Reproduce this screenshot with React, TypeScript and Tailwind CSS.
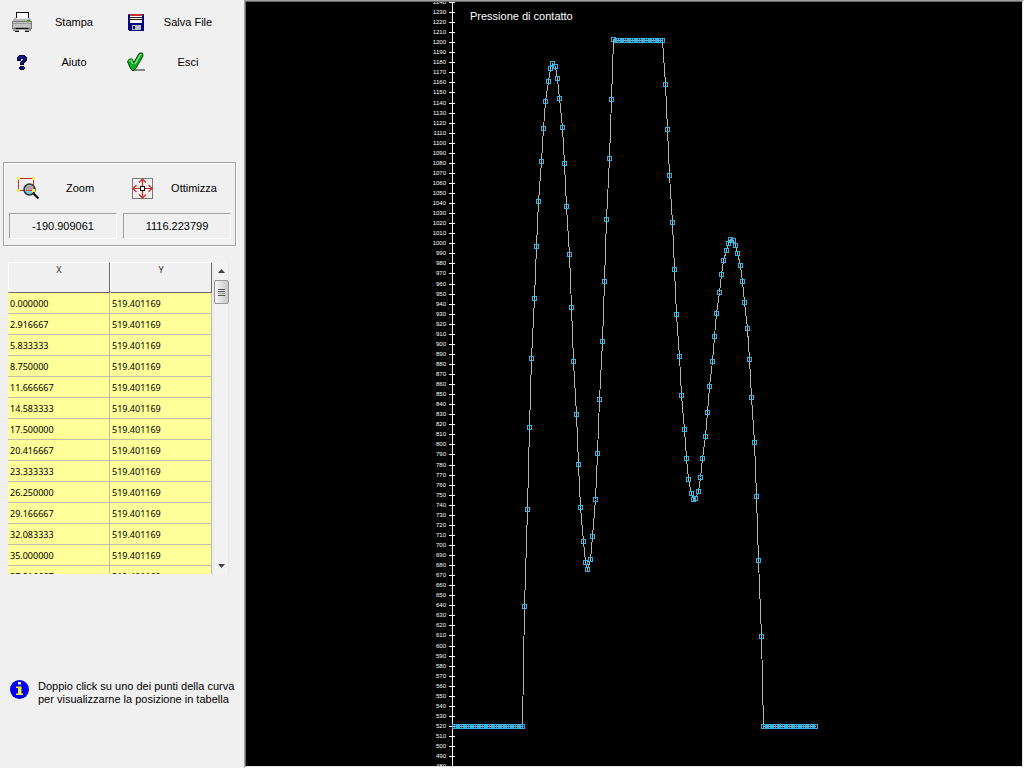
import { useState } from "react"
import type { ReactNode } from "react"

const STEP_X = 35 / 12
const BASE_PRESSURE = 519.401169
const VISIBLE_ROWS = 14

// Screen heights of the samples between the flat stretches
const RISE = [
  606, 509, 427, 358, 298, 246, 201, 161, 128, 101, 81, 68, 63, 66, 78, 98, 127, 163, 206, 254,
  307, 361, 414, 464, 507, 541, 562, 569, 559, 536, 499, 453, 399, 341, 281, 219, 158, 99, 39,
]
const FALL = [
  84, 129, 175, 222, 269, 314, 356, 395, 429, 458, 479, 493, 499, 498, 491, 477, 458, 436, 412,
  386, 361, 336, 313, 292, 274, 260, 250, 243, 239, 240, 245, 253, 265, 281, 302, 328, 359, 397,
  442, 496, 560, 636,
]
const CURVE = [
  ...Array<number>(30).fill(726),
  ...RISE,
  ...Array<number>(21).fill(40),
  ...FALL,
  ...Array<number>(23).fill(726),
].map((y, i) => ({ x: Math.round(454 + i * 2.342), y }))

const ROWS = CURVE.map((p, i) => ({
  x: (i * STEP_X).toFixed(6),
  y: (BASE_PRESSURE + (726 - p.y) / 1.0056).toFixed(6),
}))

const TICKS = Array.from({ length: 77 }, (_, i) => 1240 - i * 10)

const tickY = (value: number) => Math.round(726 - (value - 520) * 1.0056)

function PrinterIcon() {
  return (
    <svg width="20" height="20" viewBox="0 0 20 20" shapeRendering="crispEdges">
      <path d="M5 0h12v7H4V3z" fill="#fff" />
      <path d="M4 0h13v1H5v5H4zM16 1h1v5h-1z" fill="#111" />
      <path d="M2 6h16v1h1v2H1V7h1z" fill="#b8b8b8" />
      <path d="M4 6h12v1H4z" fill="#eee" />
      <path d="M0 9h20v8H0z" fill="#777" />
      <path d="M1 10h18v6H1z" fill="#c3c3c3" />
      <path d="M1 11h18v1H1zM2 15h16v1H2z" fill="#999" />
      <path d="M15 8h2v2h-2z" fill="#22b422" />
      <path d="M17 8h1v2h-1z" fill="#b06010" />
      <path d="M1 17h18v2H1z" fill="#999" />
      <path d="M4 16h12v1H4zM3 19h4v1H3zM13 19h4v1h-4z" fill="#111" />
      <path d="M7 18h6v1H7z" fill="#fff" />
    </svg>
  )
}

function FloppyIcon() {
  return (
    <svg width="16" height="17" viewBox="0 0 16 17" shapeRendering="crispEdges">
      <path d="M0 0h16v17H1L0 16z" fill="#05057e" />
      <path d="M2 0h12v9H2z" fill="#fff" />
      <path d="M2 0h12v2H2z" fill="#c23030" />
      <path d="M2 3h12v1H2zM2 5h12v1H2z" fill="#222" />
      <path d="M4 11h9v5H4z" fill="#b9bdc6" />
      <path d="M5 12h2v3H5z" fill="#05057e" />
      <path d="M0 0h1v1H0zM14 1h1v1h-1z" fill="#4d4db0" />
    </svg>
  )
}

function HelpIcon() {
  return (
    <svg width="12" height="15" viewBox="0 0 12 15" shapeRendering="crispEdges">
      <path
        d="M3 0h6v1h1v1h1v4h-1v1H9v1H8v2H4V7h1V6h1V5h1V4H5v2H1V2h1V1h1zM4 11h4v1h1v2H8v1H4v-1H3v-2h1z"
        fill="#050535"
      />
      <path d="M3 1h5v1h2v3H9v1H8v1H7v2H5V7h1V6h1V5h1V3H4v2H2V2h1zM5 12h3v2H5z" fill="#1414a0" />
    </svg>
  )
}

function CheckIcon() {
  return (
    <svg width="18" height="20" viewBox="0 0 18 20">
      <path d="M7 17h11v2H7z" fill="#858585" />
      <path
        d="M.5 9.5l2-2.500h2.500l2 3.500 3.500-6.500 2-3h3l.5 3-3.500 6-3.500 6-2 2.500H5l-2-3z"
        fill="#12ac22"
        stroke="#063b0a"
        strokeLinejoin="round"
      />
      <path d="M2 9l2-1 2 4M8 12l4-7 2-3" fill="none" stroke="#7bf07c" strokeWidth="1.3" />
    </svg>
  )
}

function ZoomIcon() {
  return (
    <svg width="22" height="22" viewBox="0 0 22 22">
      <path d="M1.500 1.500h15v12h-15z" fill="none" stroke="#c92b2b" shapeRendering="crispEdges" />
      <circle cx="12.500" cy="12.500" r="5.500" fill="#7fc9cc" stroke="#333" strokeWidth="1.5" />
      <path d="M9 9h6v4H9z" fill="#d98a98" opacity=".7" />
      <path d="M16.500 8v5.500H9" fill="none" stroke="#c92b2b" opacity=".7" />
      <path
        d="M0 0h3v3H0zM15 0h3v3h-3zM0 12h3v3H0zM15 12h3v3h-3z"
        fill="#f5ec55"
        shapeRendering="crispEdges"
      />
      <path d="M16.500 16.500l5 5" stroke="#111" strokeWidth="2.2" />
    </svg>
  )
}

function FitIcon() {
  return (
    <svg width="21" height="21" viewBox="0 0 21 21">
      <path d="M.5.5h20v20H.5z" fill="#f5efef" stroke="#777" shapeRendering="crispEdges" />
      <path
        d="M10.5 1v19M1 10.5h19M7 4.5l3.5-3.5L14 4.5M7 16.5l3.5 3.5 3.5-3.5M4.5 7L1 10.5 4.5 14M16.5 7l3.5 3.5-3.5 3.5"
        fill="none"
        stroke="#c92b2b"
        strokeWidth="1.2"
      />
      <path d="M8.5 8.5h4v4h-4z" fill="#fff" stroke="#111" shapeRendering="crispEdges" />
    </svg>
  )
}

function InfoIcon() {
  return (
    <svg width="19" height="19" viewBox="0 0 19 19" className="shrink-0">
      <circle cx="9.5" cy="9.5" r="9.5" fill="#0202ee" />
      <path d="M8 2h3v2.5H8z" fill="#f4f4c0" />
      <path d="M6 6.5h5.500v7H13V15H6v-1.500h2V8H6z" fill="#f5ee28" />
    </svg>
  )
}

function ToolButton({ icon, label, onClick }: { icon: ReactNode; label: string; onClick?: () => void }) {
  return (
    <button type="button" onClick={onClick} className="flex h-10 w-[107px] items-center">
      <span className="flex w-[38px] justify-center">{icon}</span>
      <span className="w-[66px] text-center">{label}</span>
    </button>
  )
}

function Readout({ label, value }: { label: string; value: string }) {
  return (
    <input
      readOnly
      aria-label={label}
      value={value}
      className="h-[26px] w-[108px] border border-t-[#a0a0a0] border-r-white border-b-white border-l-[#a0a0a0] bg-transparent text-center text-[11px] outline-none"
    />
  )
}

function PointsTable({ first, onScroll }: { first: number; onScroll: (first: number) => void }) {
  return (
    <div className="mt-4 ml-2 flex h-[312px] w-[221px]">
      <div className="w-[204px] overflow-hidden">
        <table className="w-full table-fixed border-separate border-spacing-0 font-['Noto_Sans',sans-serif] text-[9px]">
          <thead>
            <tr className="h-[31px]">
              {["X", "Y"].map((name) => (
                <th
                  key={name}
                  scope="col"
                  className="border border-t-white border-r-[#696969] border-b-[#696969] border-l-white bg-[#f0f0f0] p-0 align-top font-normal text-[#333]"
                >
                  {name}
                </th>
              ))}
            </tr>
          </thead>
          <tbody>
            {ROWS.slice(first, first + VISIBLE_ROWS).map((row) => (
              <tr key={row.x} className="h-[21px] bg-[#ffff99]">
                <td className="border-r border-b border-[#c0c0a8] p-0 pt-px pl-0.5">{row.x}</td>
                <td className="border-r border-b border-[#c0c0a8] p-0 pt-px pl-0.5">{row.y}</td>
              </tr>
            ))}
          </tbody>
        </table>
      </div>

      {/* Scrollbar */}
      <div className="ml-px flex w-4 flex-col items-center border-x border-[#e8e8e8] bg-[#f2f2f2]">
        <button
          type="button"
          aria-label="Su"
          onClick={() => onScroll(first - 1)}
          className="flex h-[18px] w-full items-center justify-center"
        >
          <svg width="7" height="4" viewBox="0 0 7 4">
            <path d="M0 4L3.5 0 7 4z" fill="#444" />
          </svg>
        </button>
        <div className="flex h-6 w-[15px] shrink-0 flex-col items-center justify-center gap-px rounded-xs border border-[#979797] bg-linear-to-r from-[#f5f5f5] to-[#c8c8cb]">
          <span className="h-px w-[7px] bg-[#555]" />
          <span className="h-px w-[7px] bg-[#555]" />
          <span className="h-px w-[7px] bg-[#999]" />
          <span className="h-px w-[7px] bg-[#555]" />
        </div>
        <button
          type="button"
          aria-label="Giù"
          onClick={() => onScroll(first + 1)}
          className="mt-auto flex h-4 w-full items-center justify-center"
        >
          <svg width="7" height="4" viewBox="0 0 7 4">
            <path d="M0 0h7L3.5 4z" fill="#444" />
          </svg>
        </button>
      </div>
    </div>
  )
}

function PressureChart({ onPick }: { onPick: (index: number) => void }) {
  return (
    <svg viewBox="246 2 776 764" className="block h-auto w-full font-['Liberation_Sans',Arial,sans-serif]">
      {/* Axis */}
      <g shapeRendering="crispEdges" stroke="#fff">
        <path d="M452.5 2v764" />
        {TICKS.map((v) => (
          <path key={v} d={`M449 ${tickY(v) + 0.5}h6`} />
        ))}
      </g>
      <g fill="#fff" fontSize="6" textAnchor="end">
        {TICKS.map((v) => (
          <text key={v} x="446" y={tickY(v) + 2}>
            {v}
          </text>
        ))}
      </g>

      <text x="470" y="20" fill="#fff" fontSize="11">
        Pressione di contatto
      </text>

      {/* Curve */}
      <polyline
        points={CURVE.map((p) => `${p.x + 0.5},${p.y + 0.5}`).join(" ")}
        fill="none"
        stroke="#b4b4b0"
        shapeRendering="crispEdges"
      />
      <g fill="none" stroke="#30b4ea" shapeRendering="crispEdges">
        {CURVE.map((p, i) => (
          <rect
            key={i}
            x={p.x - 1.5}
            y={p.y - 1.5}
            width="4"
            height="4"
            onDoubleClick={() => onPick(i)}
          />
        ))}
      </g>
    </svg>
  )
}

export default function App() {
  const [first, setFirst] = useState(0)

  const scrollTo = (row: number) =>
    setFirst(Math.min(Math.max(row, 0), ROWS.length - VISIBLE_ROWS + 1))

  return (
    <div className="flex min-h-screen bg-[#f0f0f0] font-['Liberation_Sans',Arial,sans-serif] text-[11px] text-black">
      <aside className="w-[244px] shrink-0">
        {/* Toolbar */}
        <div className="flex flex-wrap gap-x-[7px] pt-0.5 pl-[3px]">
          <ToolButton icon={<PrinterIcon />} label="Stampa" onClick={() => window.print()} />
          <ToolButton icon={<FloppyIcon />} label="Salva File" />
          <ToolButton icon={<HelpIcon />} label="Aiuto" />
          <ToolButton icon={<CheckIcon />} label="Esci" />
        </div>

        {/* Zoom and cursor position */}
        <div className="mt-20 ml-[3px] w-[233px] border border-[#a0a0a0] px-[5px] py-[5px] pb-1.5 shadow-[inset_1px_1px_0_#fff,1px_1px_0_#fff]">
          <div className="flex gap-[7px]">
            <ToolButton icon={<ZoomIcon />} label="Zoom" />
            <ToolButton icon={<FitIcon />} label="Ottimizza" />
          </div>
          <div className="mt-[5px] flex gap-1.5">
            <Readout label="X" value="-190.909061" />
            <Readout label="Y" value="1116.223799" />
          </div>
        </div>

        <PointsTable first={first} onScroll={scrollTo} />

        {/* Hint */}
        <div className="mt-[106px] ml-2.5 flex items-start gap-[9px]">
          <InfoIcon />
          <p className="leading-[13px] whitespace-nowrap">
            Doppio click su uno dei punti della curva
            <br />
            per visualizzarne la posizione in tabella
          </p>
        </div>
      </aside>

      <main className="min-w-0 flex-1 border border-t-[#a0a0a0] border-r-white border-b-white border-l-[#a0a0a0] bg-black">
        <div className="border border-t-[#696969] border-r-[#e3e3e3] border-b-[#e3e3e3] border-l-[#696969]">
          <PressureChart onPick={scrollTo} />
        </div>
      </main>
    </div>
  )
}
